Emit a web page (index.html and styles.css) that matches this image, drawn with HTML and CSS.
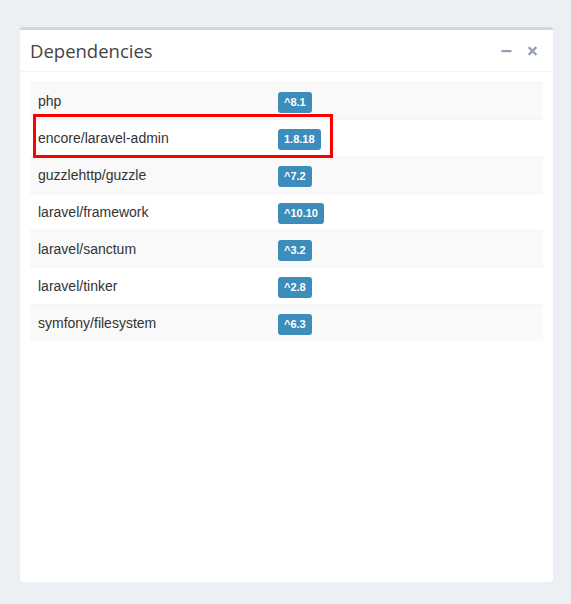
FILE: index.html
```html
<!DOCTYPE html>
<html>
<head>
<meta charset="utf-8">
<link rel="stylesheet" href="styles.css">
</head>
<body>
<div class="box">
  <div class="box-header">
    <h3 class="box-title">Dependencies</h3>
    <div class="box-tools">
      <svg class="tool" width="11" height="12" viewBox="0 0 11 12"><rect x="0.5" y="5" width="10" height="2.2" fill="#97a0b3"/></svg>
      <svg class="tool" width="9" height="12" viewBox="0 0 9 12"><path d="M1.5 3 L7.5 9 M7.5 3 L1.5 9" stroke="#97a0b3" stroke-width="2.4" stroke-linecap="square"/></svg>
    </div>
  </div>
  <div class="box-body">
    <table class="deps">
      <tr><td class="name">php</td><td><span class="label">^8.1</span></td></tr>
      <tr><td class="name">encore/laravel-admin</td><td><span class="label">1.8.18</span></td></tr>
      <tr><td class="name">guzzlehttp/guzzle</td><td><span class="label">^7.2</span></td></tr>
      <tr><td class="name">laravel/framework</td><td><span class="label">^10.10</span></td></tr>
      <tr><td class="name">laravel/sanctum</td><td><span class="label">^3.2</span></td></tr>
      <tr><td class="name">laravel/tinker</td><td><span class="label">^2.8</span></td></tr>
      <tr><td class="name">symfony/filesystem</td><td><span class="label">^6.3</span></td></tr>
    </table>
    <div class="highlight"></div>
  </div>
</div>
</body>
</html>
```
FILE: styles.css
```css
html, body {
  margin: 0;
  padding: 0;
  background: #ecf0f5;
}
body {
  padding: 27px 18px 0 20px;
  font-family: "Liberation Sans", Arial, sans-serif;
}
.box {
  width: 533px;
  height: 555px;
  box-sizing: border-box;
  background: #fff;
  border-top: 3px solid #d2d6de;
  border-radius: 3px;
  box-shadow: 0 1px 1px rgba(0,0,0,0.12);
}
.box-header {
  display: flex;
  align-items: center;
  justify-content: space-between;
  padding: 10px;
  height: 21px;
  border-bottom: 1px solid #f4f4f4;
}
.box-title {
  margin: 0;
  font-family: "Open Sans", sans-serif;
  font-weight: 400;
  font-size: 18.5px;
  line-height: 21px;
  color: #444;
}
.box-tools {
  display: flex;
  gap: 16px;
  padding-right: 6px;
  margin-top: 1px;
}
.tool { display: block; }
.box-body {
  position: relative;
  padding: 10px;
}
.deps {
  width: 100%;
  border-collapse: collapse;
  font-size: 14px;
  color: #333;
}
.deps td {
  padding: 8px;
  height: 20px;
  line-height: 20px;
  border-top: 1px solid #f4f4f4;
  vertical-align: middle;
}
.deps tr:nth-child(odd) { background: #f9f9f9; }
.deps td.name { width: 224px; }
.label {
  display: inline-block;
  background: #3c8dbc;
  color: #fff;
  font-size: 11px;
  font-weight: 700;
  line-height: 13px;
  padding: 4px 6px;
  margin: -3px 0;
  border-radius: 3px;
  vertical-align: middle;
}
.highlight {
  position: absolute;
  left: 13px;
  top: 42px;
  width: 300px;
  height: 44px;
  box-sizing: border-box;
  border: 3px solid #f00;
}
```
